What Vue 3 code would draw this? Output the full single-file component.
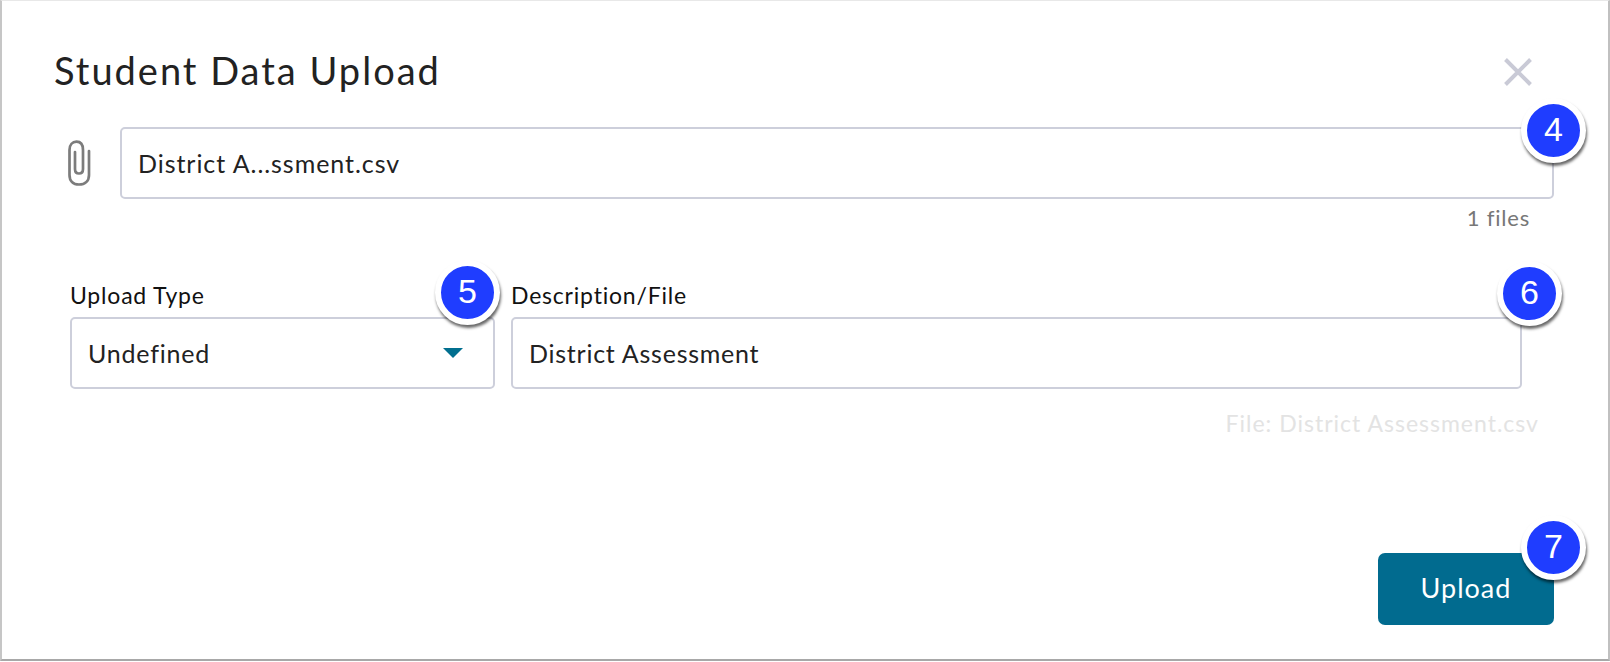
<script setup>
const fileName = 'District A...ssment.csv'
</script>

<template>
  <div class="card">
    <header class="head">
      <h1 class="title">Student Data Upload</h1>
      <svg class="close" width="28" height="28" viewBox="0 0 28 28" aria-label="Close">
        <path d="M1.5 1.5 26.5 26.5M26.5 1.5 1.5 26.5" fill="none" stroke="#c9cad6" stroke-width="4" />
      </svg>
    </header>

    <div class="file-row">
      <svg class="clip" width="24" height="46" viewBox="0 0 24 46" aria-hidden="true">
        <path d="M22 11V35C22 41 18 44.5 12 44.5C6 44.5 2.5 41 2.5 35V10C2.5 4.5 5.5 1.7 9.5 1.7C13.5 1.7 16 4.5 16 10V29C16 32 14.5 33.5 12 33.5C9.5 33.5 8 32 8 29V12" fill="none" stroke="#7c7c7c" stroke-width="2.7" stroke-linecap="round" />
      </svg>
      <div class="field file-field">{{ fileName }}</div>
      <span class="badge b4">4</span>
    </div>
    <div class="count">1 files</div>

    <div class="form-row">
      <div class="col type">
        <label class="label">Upload Type</label>
        <div class="field select">
          <span>Undefined</span>
          <i class="caret"></i>
        </div>
        <span class="badge b5">5</span>
      </div>
      <div class="col desc">
        <label class="label">Description/File</label>
        <div class="field desc-field">District Assessment</div>
        <span class="badge b6">6</span>
      </div>
    </div>
    <div class="hint">File: District Assessment.csv</div>

    <footer class="foot">
      <button class="upload">Upload</button>
      <span class="badge b7">7</span>
    </footer>
  </div>
</template>

<style>
html, body { margin: 0; background: #fff; }
</style>

<style scoped>
.card {
  box-sizing: border-box;
  width: 1610px;
  height: 661px;
  padding: 0 55px 0 0;
  background: #fff;
  border-left: 2px solid #c6c6c6;
  border-right: 2px solid #c0c0c0;
  border-top: 1px solid #e8e8e8;
  border-bottom: 2px solid #a8a8a8;
  font-family: Lato, "Open Sans", sans-serif;
  color: #222;
  display: flex;
  flex-direction: column;
}
.head {
  display: flex;
  justify-content: space-between;
  align-items: center;
  padding: 46px 21px 0 52px;
}
.title {
  margin: 0;
  font-size: 38px;
  font-weight: 400;
  letter-spacing: 2px;
  line-height: 46px;
  color: #222;
}
.close { flex: none; margin-top: 3px; }
.file-row {
  position: relative;
  display: flex;
  align-items: center;
  margin: 34px -1px 0 65px;
}
.clip { flex: none; margin-right: 29px; }
.field {
  box-sizing: border-box;
  height: 72px;
  padding: 0 17px;
  border: 2px solid #cdcfdb;
  border-radius: 5px;
  font-size: 25px;
  line-height: 68px;
  letter-spacing: 0.8px;
  color: #222;
  background: #fff;
}
.file-field { flex: 1; padding-left: 16px; letter-spacing: 0.95px; }
.desc-field { padding-left: 16px; letter-spacing: 0.75px; }
.count {
  margin: 5px 23px 0 0;
  text-align: right;
  font-size: 22px;
  line-height: 28px;
  color: #777;
  letter-spacing: 0.8px;
}
.form-row {
  display: flex;
  gap: 16px;
  margin: 48px 31px 0 68px;
}
.col { position: relative; display: flex; flex-direction: column; }
.type { width: 425px; flex: none; }
.desc { flex: 1; }
.label {
  font-size: 23px;
  line-height: 30px;
  color: #111;
  letter-spacing: 0.8px;
  margin-bottom: 7px;
}
.select { display: flex; justify-content: space-between; align-items: center; padding-left: 16px; padding-right: 30px; }
.caret {
  width: 0;
  height: 0;
  border-left: 10px solid transparent;
  border-right: 10px solid transparent;
  border-top: 10px solid #016f8f;
}
.hint {
  margin: 19px 14px 0 0;
  text-align: right;
  font-size: 23px;
  line-height: 30px;
  color: #e3e3e3;
  letter-spacing: 1px;
}
.foot {
  position: relative;
  margin: auto -1px 34px 0;
  display: flex;
  justify-content: flex-end;
}
.upload {
  width: 176px;
  height: 72px;
  padding: 0 0 3px;
  border: 0;
  border-radius: 7px;
  background: #016b8f;
  color: #fff;
  font-family: inherit;
  font-size: 27px;
  letter-spacing: 1px;
}
.badge {
  position: absolute;
  box-sizing: content-box;
  width: 53px;
  height: 53px;
  border: 6px solid #fff;
  border-radius: 50%;
  background: #1f3dff;
  color: #fff;
  font-family: "Liberation Sans", Arial, sans-serif;
  font-size: 34px;
  line-height: 51px;
  text-align: center;
  box-shadow: 1px 3px 3px rgba(0, 0, 0, 0.6);
}
.b4 { right: -32px; top: -29px; }
.b5 { right: -5px; top: -20px; }
.b6 { right: -40px; top: -19px; }
.b7 { right: -32px; top: -38px; }
</style>
